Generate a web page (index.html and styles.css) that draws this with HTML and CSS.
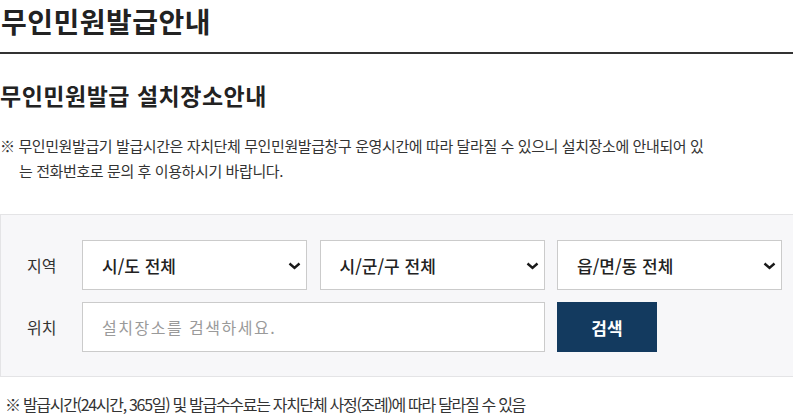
FILE: index.html
```html
<!DOCTYPE html>
<html lang="ko">
<head>
<meta charset="utf-8">
<title>무인민원발급안내</title>
<link rel="stylesheet" href="styles.css">
</head>
<body>
<h1 class="page-title">무인민원발급안내</h1>
<h2 class="sub-title">무인민원발급 설치장소안내</h2>
<p class="notice">※ 무인민원발급기 발급시간은 자치단체 무인민원발급창구 운영시간에 따라 달라질 수 있으니 설치장소에 안내되어 있는 전화번호로 문의 후 이용하시기 바랍니다.</p>
<form class="search-box">
  <label class="field-label">지역</label>
  <div class="select-wrap">
    <select class="select"><option>시/도 전체</option></select>
    <svg class="chevron" width="13" height="8" viewBox="0 0 13 8"><path d="M1.5 1.5 L6.5 6 L11.5 1.5" fill="none" stroke="#1a1a1a" stroke-width="2.4"/></svg>
  </div>
  <div class="select-wrap">
    <select class="select"><option>시/군/구 전체</option></select>
    <svg class="chevron" width="13" height="8" viewBox="0 0 13 8"><path d="M1.5 1.5 L6.5 6 L11.5 1.5" fill="none" stroke="#1a1a1a" stroke-width="2.4"/></svg>
  </div>
  <div class="select-wrap">
    <select class="select"><option>읍/면/동 전체</option></select>
    <svg class="chevron" width="13" height="8" viewBox="0 0 13 8"><path d="M1.5 1.5 L6.5 6 L11.5 1.5" fill="none" stroke="#1a1a1a" stroke-width="2.4"/></svg>
  </div>
  <label class="field-label">위치</label>
  <input class="text-input" type="text" placeholder="설치장소를 검색하세요.">
  <button class="search-btn" type="button">검색</button>
</form>
<p class="foot-note">※ 발급시간(24시간, 365일) 및 발급수수료는 자치단체 사정(조례)에 따라 달라질 수 있음</p>
</body>
</html>
```

FILE: styles.css
```css
* { box-sizing: border-box; }
html, body { margin: 0; padding: 0; background: #fff; }
body {
  font-family: "Noto Sans CJK KR", "Noto Sans", sans-serif;
  color: #333;
  width: 793px;
  overflow: hidden;
}
.page-title {
  margin: 0;
  padding: 1px 0 11px 1px;
  font-size: 28px;
  line-height: 40px;
  font-weight: 700;
  letter-spacing: 0.5px;
  color: #222;
  border-bottom: 2px solid #333;
}
.sub-title {
  margin: 23px 0 0 0;
  font-size: 23px;
  line-height: 36px;
  font-weight: 700;
  letter-spacing: 0.5px;
  color: #222;
}
.notice {
  margin: 20px 0 0 0;
  padding-left: 19px;
  text-indent: -19px;
  font-size: 15px;
  line-height: 25px;
  letter-spacing: -0.4px;
  color: #333;
  width: 715px;
}
.search-box {
  margin: 31px 0 0 0;
  padding: 25px 0 24px 26px;
  background: #f7f7f9;
  border: 1px solid #e4e4e6;
  border-right: 0;
  display: grid;
  grid-template-columns: 42.5px 225px 225px 225px;
  grid-template-rows: 50px 50px;
  column-gap: 12.5px;
  row-gap: 12px;
  align-items: center;
}
.field-label {
  font-size: 16px;
  color: #333;
  line-height: 20px;
}
.select-wrap {
  position: relative;
  height: 50px;
}
.select {
  -webkit-appearance: none;
  appearance: none;
  width: 100%;
  height: 50px;
  margin: 0;
  padding: 0 30px 0 19px;
  border: 1px solid #cbcbcb;
  border-radius: 0;
  background: #fff;
  font-family: inherit;
  font-size: 17px;
  font-weight: 500;
  color: #222;
  outline: none;
}
.chevron {
  position: absolute;
  right: 6px;
  top: 22px;
  pointer-events: none;
}
.text-input {
  grid-column: 2 / span 2;
  height: 50px;
  width: 100%;
  margin: 0;
  padding: 0 19px;
  border: 1px solid #cbcbcb;
  border-radius: 0;
  background: #fff;
  font-family: inherit;
  font-size: 16px;
  letter-spacing: 1.5px;
  color: #333;
  outline: none;
}
.text-input::placeholder { color: #9a9a9a; }
.search-btn {
  width: 100px;
  height: 50px;
  margin: 0;
  padding: 0;
  border: 0;
  border-radius: 0;
  background: #133a5f;
  color: #fff;
  font-family: inherit;
  font-size: 17px;
  font-weight: 700;
}
.foot-note {
  margin: 16px 0 0 0;
  padding-left: 5px;
  font-size: 16px;
  line-height: 22px;
  letter-spacing: -1.3px;
  color: #333;
}
```
